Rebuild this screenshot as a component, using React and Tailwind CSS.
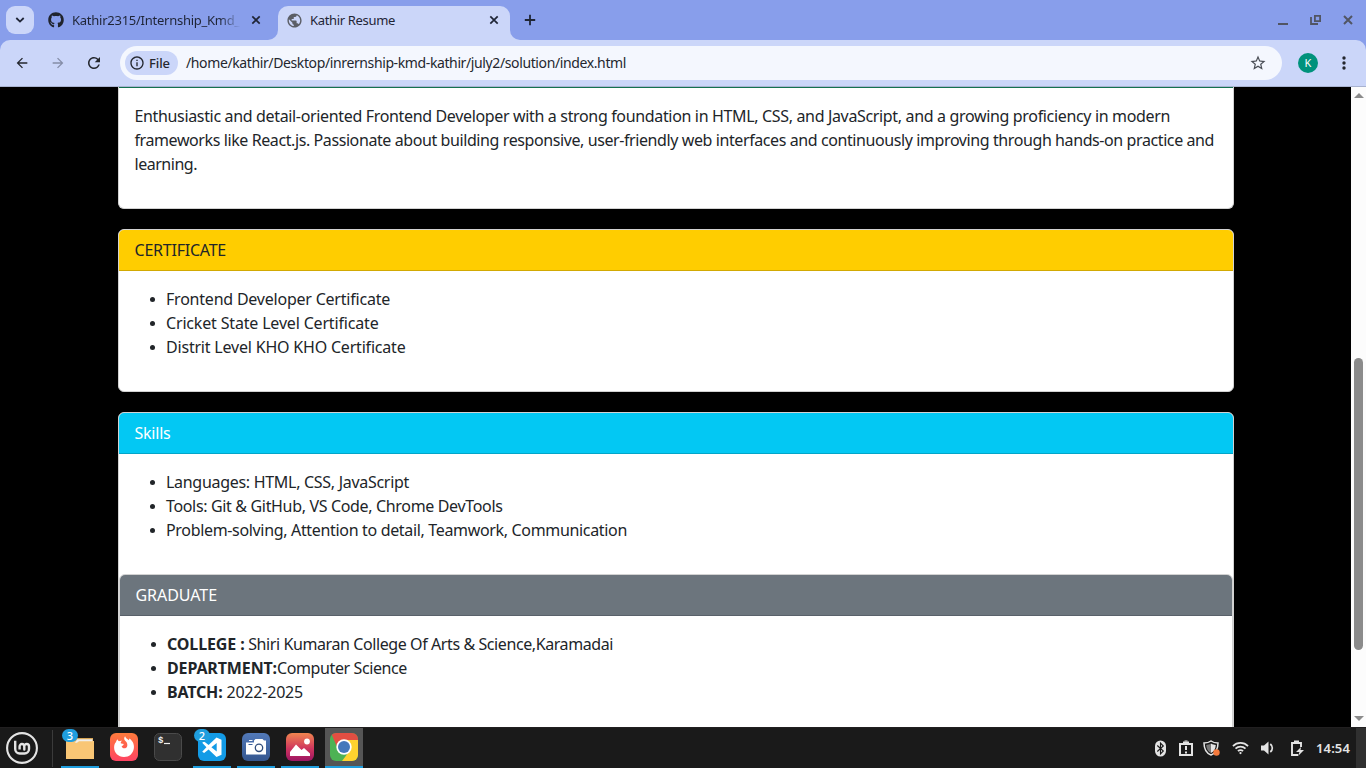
import { useLayoutEffect, useRef } from "react";
import { FaGithub } from "react-icons/fa";
import { MdPublic, MdStarBorder, MdRefresh, MdArrowBack, MdArrowForward, MdInfoOutline } from "react-icons/md";

/* Text run whose letter spacing is adjusted so that it spans a given width. */
function Fit({ w, className = "", children }) {
  const ref = useRef(null);
  useLayoutEffect(() => {
    const el = ref.current;
    const apply = () => {
      el.style.letterSpacing = "0px";
      const n = el.textContent.length;
      const natural = el.getBoundingClientRect().width;
      el.style.letterSpacing = (w - natural) / n + "px";
    };
    apply();
    document.fonts?.ready.then(apply);
  }, [w]);
  return (
    <span ref={ref} className={"inline-block whitespace-pre " + className}>
      {children}
    </span>
  );
}

function CloseIcon({ className }) {
  return (
    <svg viewBox="0 0 14 14" className={"h-3.5 w-3.5 shrink-0 " + className} fill="none" stroke="currentColor" strokeWidth="1.7">
      <path d="m3.300 3.300 7.400 7.400m0-7.400-7.400 7.400" />
    </svg>
  );
}

function TabStrip() {
  return (
    <header className="flex h-10 shrink-0 bg-[#889eeb] text-[#1f2536]">
      <div className="flex w-[268px] items-center pl-1.5">
        <div className="flex h-7 w-7 items-center justify-center rounded-[9px] bg-[#cbd6f9]">
          <svg viewBox="0 0 10 8" className="h-2 w-2.5" fill="none" stroke="#1f2536" strokeWidth="1.8">
            <path d="M1.3 2 5 5.6 8.7 2" />
          </svg>
        </div>
        <FaGithub className="ml-3.5 h-4 w-4 shrink-0 text-[#20242e]" />
        <div className="ml-2 w-[170px] shrink-0 text-[13px] leading-5 [mask-image:linear-gradient(to_right,#000_87%,transparent_99%)]">
          <Fit w={168}>Kathir2315/Internship_Kmd_</Fit>
        </div>
        <CloseIcon className="ml-[7px]" />
      </div>
      <div className="flex w-2.5 items-end bg-[#cbd6f9]">
        <div className="h-full w-2.5 rounded-br-[10px] bg-[#889eeb]" />
      </div>
      <div className="flex w-[232px] items-end bg-[#889eeb]">
        <div className="flex h-[34px] w-full items-center rounded-t-[10px] bg-[#cbd6f9] pb-1.5 pl-2">
          <MdPublic className="h-[17px] w-[17px] text-[#5b5e66]" />
          <Fit w={85} className="ml-[7px] text-[13px] leading-5">Kathir Resume</Fit>
          <CloseIcon className="ml-auto mr-[9px]" />
        </div>
      </div>
      <div className="w-2.5 bg-[#cbd6f9]">
        <div className="h-full w-2.5 rounded-bl-[10px] bg-[#889eeb]" />
      </div>
      <svg viewBox="0 0 12 12" className="ml-1 mt-3.5 h-3 w-3" fill="none" stroke="currentColor" strokeWidth="1.800">
        <path d="M6 .8v10.400M.8 6h10.400" />
      </svg>
      <svg viewBox="0 0 76 12" className="ml-auto mr-[13px] mt-3.5 h-3 w-[76px]" fill="none" stroke="#515563" strokeWidth="2">
        <path d="M1 10h10" />
        <path d="M37.900 1.900h5.200v5.200h-5.200zM34 3v7h7" strokeWidth="1.8" />
        <path d="m67 2 8 8m0-8-8 8" />
      </svg>
    </header>
  );
}

function Toolbar() {
  return (
    <div className="h-[46px] shrink-0 bg-[#889eeb]">
      <div className="flex h-full items-center rounded-t-[10px] bg-[#cbd6f9] text-[#24272e]">
        <MdArrowBack className="ml-3.5 h-4 w-4" />
        <MdArrowForward className="ml-5 h-4 w-4 text-[#858da7]" />
        <MdRefresh className="ml-[19px] h-[18px] w-[18px]" />
        <div className="ml-[17px] flex h-[34px] w-[1162px] items-center rounded-full bg-[#f4f7fe] pl-[5px]">
          <div className="flex h-6 w-[53px] items-center rounded-full bg-[#cbd6f9] pl-1">
            <MdInfoOutline className="h-4 w-4" />
            <Fit w={21} className="ml-1 text-[13px] font-medium leading-5">File</Fit>
          </div>
          <Fit w={440} className="ml-2 text-[14px] leading-5">
            /home/kathir/Desktop/inrernship-kmd-kathir/july2/solution/index.html
          </Fit>
          <MdStarBorder className="ml-auto mr-[15px] h-[18px] w-[18px] text-[#494d55]" />
        </div>
        <div className="ml-4 flex h-5 w-5 items-center justify-center rounded-full bg-[#00927c] text-[11px] text-white">K</div>
        <svg viewBox="0 0 4 14" className="ml-6 h-3.5 w-1" fill="currentColor">
          <circle cx="2" cy="2" r="1.700" /><circle cx="2" cy="7" r="1.700" /><circle cx="2" cy="12" r="1.700" />
        </svg>
      </div>
    </div>
  );
}

function Bullets({ rows }) {
  return (
    <ul className="pb-8 pl-[47.500px] pt-4">
      {rows.map(([bold, boldWidth, text, width]) => (
        <li key={text} className="flex h-6 items-center">
          <i className="-ml-[16.500px] mr-[11px] mt-px h-[5px] w-[5px] shrink-0 rounded-full bg-[#212529]" />
          {bold && <Fit w={boldWidth} className="font-bold">{bold}</Fit>}
          <Fit w={width}>{text}</Fit>
        </li>
      ))}
    </ul>
  );
}

function Page() {
  return (
    <main className="flex min-h-0 flex-1 bg-black text-[16px] leading-6 text-[#212529]">
      <div className="flex h-full flex-1 flex-col overflow-hidden pl-[118px] pr-[117px]">
        <section className="h-[122px] shrink-0 rounded-b-md border-x border-b border-[#d2d2d2] bg-white">
          <div className="h-px bg-[#147151]" />
          <div className="flex flex-col items-start pl-[15.500px] pt-4">
            <Fit w={1035.5}>Enthusiastic and detail-oriented Frontend Developer with a strong foundation in HTML, CSS, and JavaScript, and a growing proficiency in modern</Fit>
            <Fit w={1079.5}>frameworks like React.js. Passionate about building responsive, user-friendly web interfaces and continuously improving through hands-on practice and</Fit>
            <Fit w={62.5}>learning.</Fit>
          </div>
        </section>
        <section className="mt-5 h-[163px] shrink-0 overflow-hidden rounded-md border border-[#d2d2d2] bg-white">
          <h2 className="h-[41px] border-b border-[#d2a902] bg-[#ffcd00] pl-[15.500px] pt-2"><Fit w={91.5}>CERTIFICATE</Fit></h2>
          <Bullets rows={[
            ["", 0, "Frontend Developer Certificate", 224],
            ["", 0, "Cricket State Level Certificate", 212.5],
            ["", 0, "Distrit Level KHO KHO Certificate", 239.5],
          ]} />
        </section>
        <section className="mt-5 h-[400px] shrink-0 overflow-hidden rounded-md border border-[#d2d2d2] bg-white">
          <h2 className="h-[41px] border-b border-[#03a5c8] bg-[#03c8f3] pl-[15.500px] pt-2 text-white"><Fit w={36}>Skills</Fit></h2>
          <Bullets rows={[
            ["", 0, "Languages: HTML, CSS, JavaScript", 243],
            ["", 0, "Tools: Git & GitHub, VS Code, Chrome DevTools", 336.5],
            ["", 0, "Problem-solving, Attention to detail, Teamwork, Communication", 461],
          ]} />
          <article className="h-60 overflow-hidden rounded-md border border-[#d2d2d2] bg-white">
            <h2 className="h-[41px] border-b border-[#59616a] bg-[#6c757d] pl-[15.500px] pt-2 text-white"><Fit w={81.5}>GRADUATE</Fit></h2>
            <Bullets rows={[
              ["COLLEGE :", 77.5, " Shiri Kumaran College Of Arts & Science,Karamadai", 368.5],
              ["DEPARTMENT:", 110, "Computer Science", 130],
              ["BATCH:", 55.5, " 2022-2025", 80.5],
            ]} />
          </article>
        </section>
      </div>
      <div className="flex w-[15px] flex-col items-center bg-[#fcfcfc]">
        <svg viewBox="0 0 10 5" className="mt-1.5 h-[5px] w-2.5" fill="#8b8b8b"><path d="M5 0l5 5H0z" /></svg>
        <div className="mt-[260px] h-[292px] w-[9px] rounded-full bg-[#8b8b8b]" />
        <svg viewBox="0 0 10 5" className="mt-[66px] h-[5px] w-2.5" fill="#8b8b8b"><path d="M0 0h10L5 5z" /></svg>
      </div>
    </main>
  );
}

function Launcher({ badge, running, active, children }) {
  return (
    <div className={"relative flex h-10 w-[38px] flex-col items-center " + (active ? "bg-[#555555]" : "")}>
      <svg viewBox="0 0 28 28" className="mt-[5px] h-7 w-7">{children}</svg>
      {badge && <b className="absolute left-px top-px flex h-[13px] w-4 items-center justify-center rounded-full bg-[#1f9ede] text-[11px] font-medium leading-none text-white">{badge}</b>}
      {running && <div className="mt-[5px] h-0.5 w-[38px] bg-[#1f9ede]" />}
    </div>
  );
}

function Taskbar() {
  return (
    <footer className="flex h-[41px] shrink-0 border-t border-[#211f20] bg-[#1a1a1a]">
      <svg viewBox="0 0 34 34" className="ml-[5px] mt-[3px] h-[34px] w-[34px]" fill="none" stroke="#e4e4e4">
        <circle cx="17" cy="17" r="14.9" strokeWidth="2.1" />
        <path d="M10.200 9.800v8.200a4.500 4.500 0 0 0 4.500 4.500h4.800a4.500 4.500 0 0 0 4.500-4.500v-2.600a2.350 2.350 0 0 0-4.700 0v3.100-3.100a2.350 2.350 0 0 0-4.700 0v3.100" strokeWidth="2.400" strokeLinejoin="round" />
      </svg>
      <div className="ml-[13px] mt-0.5 h-[37px] w-px bg-[#3b3b3b]" />
      <div className="ml-2 flex gap-1.5">
        <Launcher badge="3" running>
          <path d="M0 5h27v3H0z" fill="#d9a654" />
          <path d="M0 8h28v18H0z" fill="#f9c675" />
          <path d="M11 6.300h15.500v2H13l-2 1.500H9z" fill="#f0eeeb" />
        </Launcher>
        <Launcher>
          <defs>
            <linearGradient id="fox" x2="0" y2="1"><stop stopColor="#ff7b3c" /><stop offset="1" stopColor="#ff4363" /></linearGradient>
          </defs>
          <rect width="28" height="28" rx="6" fill="url(#fox)" />
          <path d="M7.500 6.200c.3 1 .8 1.600 1.500 2 1-.5 2-.7 3.200-.4-1.300.7-1.600 1.800-1.400 2.500.5.6 2.500.3 2.900.9-.2 1.200-1.400 1.400-2.100 2.400 1 2.700 5.300 2.200 5.700-.9.3-2.100-.7-3.700-2.100-4.900-1.400-1.500-1.200-3.500-.1-4.600.5 1.800 2.200 2.600 3.700 4l.7-1.600c2.600 1.800 4.900 5.200 4.400 9.400C23.200 20.700 19.200 24 14 24 8.200 24 4.100 19.700 4.100 14.500c0-2.700.8-4.300 1.800-5.300.2-.9.700-2.100 1.600-3z" fill="#fff" />
        </Launcher>
        <Launcher>
          <rect x=".5" y=".5" width="27" height="27" rx="5" fill="#303030" stroke="#4a4a4a" />
          <text x="4" y="10" fill="#eee" fontSize="9" fontWeight="bold" fontFamily="Liberation Mono, monospace">$</text>
          <path d="M10 10.500h6" stroke="#eee" strokeWidth="1.200" />
        </Launcher>
        <Launcher badge="2" running>
          <rect width="28" height="28" rx="6" fill="#139be6" />
          <path fill="#fff" fillRule="evenodd" d="m18.500 4.500 5 2.200v15.100l-5 2.200-7.900-7.500-4.500 3.500-1.900-1.200 4.200-4.500-4.200-4.600 1.900-1.300 4.500 3.500zm.2 5.500-5.300 4.300 5.300 4.200z" />
        </Launcher>
        <Launcher running>
          <defs><linearGradient id="cam" x2="0" y2="1"><stop stopColor="#5279b8" /><stop offset="1" stopColor="#34568f" /></linearGradient></defs>
          <rect width="28" height="28" rx="6" fill="url(#cam)" />
          <path d="M4 9.500h8V7.500l1.500-1.500h7L22 7.500h2v14H4z" fill="#fff" />
          <path d="M7 7.500h3.500" stroke="#fff" />
          <path d="M6.500 11.500h4" stroke="#3d619d" />
          <circle cx="17" cy="14.800" r="3.700" fill="#fff" stroke="#314d7b" strokeWidth="1.300" />
        </Launcher>
        <Launcher running>
          <defs><linearGradient id="pic" x2="0" y2="1"><stop stopColor="#f1854f" /><stop offset=".55" stopColor="#cf365e" /><stop offset="1" stopColor="#9c1462" /></linearGradient></defs>
          <rect width="28" height="28" rx="6" fill="url(#pic)" />
          <path d="M4 23v-4l6-7.500 5.500 5.500 2.500-2 6 5.500V23z" fill="#fff" />
          <circle cx="21" cy="8.500" r="2.900" fill="#fff" />
        </Launcher>
        <Launcher running active>
          <defs><clipPath id="tile"><rect width="28" height="28" rx="6" /></clipPath></defs>
          <g clipPath="url(#tile)">
            <path d="M0 0h28v28H0z" fill="#4db254" />
            <path d="M14 7h14v21H12l9-12z" fill="#fed22f" />
            <path d="M1 0h27v7H14l-6.500 8z" fill="#e34e42" />
          </g>
          <circle cx="14" cy="14" r="7.700" fill="#fff" />
          <circle cx="14" cy="14" r="6" fill="#4479bb" />
        </Launcher>
      </div>
      <div className="ml-auto flex items-center text-[#e4e4e4]">
        <svg viewBox="0 0 11 17" className="mr-[13px] h-[17px] w-[11px]">
          <rect y=".5" width="11" height="16" rx="5.500" fill="#e4e4e4" />
          <path d="m2.300 5.500 6 5.500-2.800 2.800V3.200L8.300 6l-6 5.500" fill="none" stroke="#1a1a1a" strokeWidth="1.100" />
        </svg>
        <svg viewBox="0 0 14 16" className="mr-[10px] h-4 w-3.5" fill="none" stroke="currentColor" strokeWidth="2">
          <path d="M1 4h12v11H1zM4 2.500h6M7 6v4m0 1.500v2" /><path d="M5.500 1h3" strokeWidth="1" />
        </svg>
        <svg viewBox="0 0 18 16" className="mr-[11px] h-4 w-[18px]">
          <path d="M8 1c2 1.500 4 2 7 2 0 6-2 10-7 12C3 13 1 9 1 3c3 0 5-.5 7-2z" fill="none" stroke="#e4e4e4" strokeWidth="1.500" />
          <path d="M8 3.500c-2 1-3 1.300-4.800 1.500.3 4 1.800 6.500 4.800 8z" fill="#777" />
          <path d="M8 3.500c2 1 3 1.300 4.800 1.500-.3 4-1.800 6.500-4.800 8z" fill="#e4e4e4" />
          <circle cx="13.500" cy="12.500" r="3.200" fill="#f57b3e" />
        </svg>
        <svg viewBox="0 0 18 14" className="mr-3 h-3.5 w-[17px]" fill="none" stroke="currentColor" strokeWidth="1.800">
          <path d="M1 5c4.500-4.500 11.500-4.500 16 0M3.700 7.700c3-3 7.600-3 10.600 0M6.300 10.300c1.500-1.500 3.900-1.500 5.400 0" /><circle cx="9" cy="12.400" r="1.200" fill="currentColor" stroke="none" />
        </svg>
        <svg viewBox="0 0 14 14" className="mr-[15px] h-3.5 w-3.5">
          <path d="M0 4.500h3L7.500.5v13l-4.500-4H0z" fill="currentColor" /><path d="M9.300 3c2.700 2.200 2.700 5.800 0 8" fill="none" stroke="currentColor" strokeWidth="1.700" />
        </svg>
        <svg viewBox="0 0 15 16" className="mr-[11px] h-4 w-[15px]" fill="none" stroke="currentColor" strokeWidth="1.900">
          <path d="M11 7V3H2v12h6M4 1.500h5" /><path d="m11 7-5 5h3.500L8 16l6-6h-3.500z" fill="currentColor" stroke="none" />
        </svg>
        <Fit w={34} className="text-[13px] font-semibold leading-5">14:54</Fit>
        <div className="ml-[6px] h-full w-2.5 bg-[#303030]" />
      </div>
    </footer>
  );
}

export default function App() {
  return (
    <div className="flex h-[768px] w-[1366px] flex-col overflow-hidden font-['Noto_Sans',sans-serif]">
      <TabStrip />
      <Toolbar />
      <div className="h-px shrink-0 bg-[#a9b3d0]" />
      <Page />
      <Taskbar />
    </div>
  );
}
